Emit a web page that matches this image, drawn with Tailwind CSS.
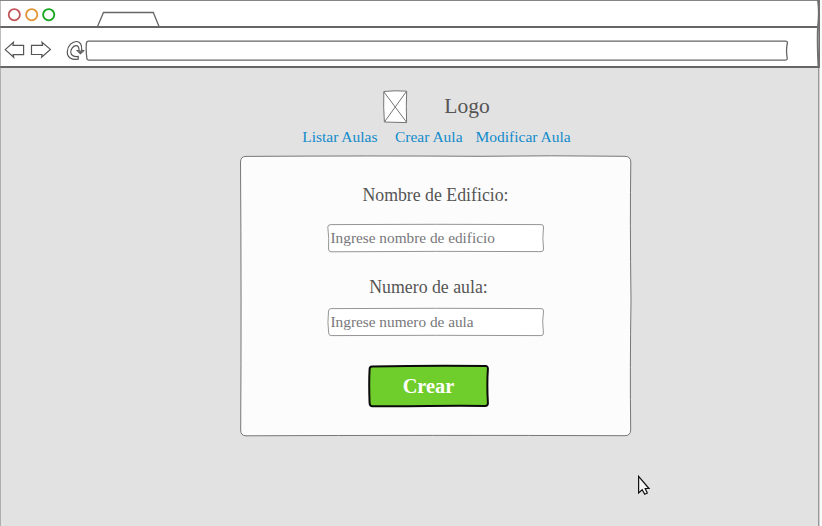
<!DOCTYPE html>
<html lang="es">
<head>
<meta charset="utf-8">
<title>Crear Aula</title>
<script src="https://cdn.jsdelivr.net/npm/@tailwindcss/browser@4"></script>
</head>
<body class="w-[822px] h-[526px] overflow-hidden bg-[#fafafa] font-['Liberation_Serif',serif] text-[#555]">
<div class="relative flex h-[526px] w-[820px] flex-col bg-[#e2e2e2]">
  <!-- window title bar -->
  <header class="flex h-[26px] items-start bg-white">
    <svg class="h-[26px] w-[820px]" viewBox="0 0 820 26" fill="none">
      <path d="M0 .5H818" stroke="#858585"/>
      <circle cx="14.3" cy="14.7" r="5.6" stroke="#c25558" stroke-width="1.8"/>
      <circle cx="31.7" cy="14.7" r="5.6" stroke="#e29535" stroke-width="1.8"/>
      <circle cx="48.7" cy="14.7" r="5.6" stroke="#13a51b" stroke-width="1.8"/>
      <path d="M97.5 26.5L103.5 12.5H153.3L159 26.5" stroke="#666" stroke-width="1.3"/>
    </svg>
  </header>
  <!-- navigation toolbar -->
  <div class="flex h-[42px] bg-white">
    <svg class="h-[42px] w-[820px]" viewBox="0 26 820 42" fill="none" stroke="#555" stroke-width="1.2">
      <path d="M0 27H819" stroke="#666" stroke-width="2"/>
      <path d="M0 67H819" stroke="#666" stroke-width="1.8"/>
      <path d="M5.200 49.600L13.400 42.300L13 45.400H23.600V54.600H13.200L13.700 57.300Z"/>
      <path d="M50.400 49.400L42 42.200L42.500 45.400H31.500V54.500H42L41.600 57.200Z"/>
      <path d="M78.200 56.400V59.200C71.500 60 67 57.500 67.300 51.500C67.600 45.500 72.500 41.300 76.800 41.500C80.500 41.800 81.900 45.500 81.700 50.200L83.600 50.700L80.400 53.600L77.200 50.700L79.100 50.300C79 47 77.800 45.300 75.800 45.600C73 46 70.400 49.500 70.800 52.700C71.200 55.600 74.300 57.100 78.200 56.400Z"/>
      <path d="M77.800 50.600H83.200L80.400 53.200Z" fill="#666" stroke="none"/>
      <path d="M88.500 41.200H785.500Q787.700 41.200 787.400 43Q785.800 50 787.200 58Q787.400 60.200 785.200 60.200H89Q87 60.200 86.800 58Q85.800 50 86.400 43.300Q86.600 41.200 88.500 41.200Z" stroke="#666" stroke-width="1.300"/>
    </svg>
  </div>
  <main class="flex flex-1 flex-col pl-[240px]">
    <div class="flex h-[55px] items-start pl-[143px] pt-[22px]">
      <svg class="h-[34px] w-[25px] shrink-0" viewBox="0 0 25 34" fill="white" stroke="#747474" stroke-width="1">
        <path d="M.8 1.500Q12 .2 23.700 1.200Q23 16 23.600 32.600L1.400 32Q.3 18 .8 1.500Z"/>
        <path d="M1 2L23.400 32M23.400 1.500L1.400 32" fill="none"/>
      </svg>
      <h1 class="ml-[36.3px] mt-[4px] whitespace-nowrap text-[21.5px] leading-[24px]">Logo</h1>
    </div>
    <nav class="flex h-[32px] whitespace-nowrap pl-[62.2px] pt-[4px] text-[15.5px] leading-[20px] text-[#118bcb]">
      <a class="w-[92.8px]">Listar Aulas</a><a class="w-[80.5px]">Crear Aula</a><a>Modificar Aula</a>
    </nav>
    <form class="relative flex h-[282px] w-[392px] flex-col items-center">
      <svg class="absolute inset-0 h-[282px] w-[392px]" viewBox="240 155 392 282">
        <path d="M246 156.400Q370 155.600 480 156.300Q550 155.300 625 156.300Q630.600 156.300 630.800 162Q629.900 220 631 300Q629.900 370 630.700 430Q630.500 435.700 625 435.700Q430 435 246 435.800Q240.600 435.700 240.700 430Q241.500 300 240.500 162Q240.700 156.300 246 156.400Z" fill="#fcfcfc" stroke="#777"/>
      </svg>
      <label class="relative mt-[28px] h-[24px] whitespace-nowrap pr-[1px] text-[17.8px] leading-[24px]">Nombre de Edificio:</label>
      <div class="relative mt-[16px] flex h-[30px] w-[218px] items-center pl-[3.5px]">
        <svg class="absolute inset-0 h-[30px] w-[218px]" viewBox="0 0 218 30"><path d="M4 1.600Q110 1 214 1.600Q216.700 1.600 216.500 4Q215.200 16 216.500 26Q216.600 28.600 214 28.600Q110 28 4 28.800Q2 28.800 1.500 26Q2.300 16 .8 4Q1 1.600 4 1.600Z" fill="white" stroke="#959595"/></svg>
        <span class="relative whitespace-nowrap text-[15.3px] leading-[20px] text-[#77777a]">Ingrese nombre de edificio</span>
      </div>
      <label class="relative mt-[22px] h-[24px] whitespace-nowrap pr-[15px] text-[17.8px] leading-[24px]">Numero de aula:</label>
      <div class="relative mt-[8px] flex h-[30px] w-[218px] items-center pl-[3.5px]">
        <svg class="absolute inset-0 h-[30px] w-[218px]" viewBox="0 0 218 30"><path d="M4 1.600Q110 1 214 1.600Q216.700 1.600 216.500 4Q214.900 14 216.400 26Q216.600 28.600 214 28.600Q110 28 4 28.600Q2 28.600 1.700 26Q.3 16 1.500 4Q2 1.600 4 1.600Z" fill="white" stroke="#959595"/></svg>
        <span class="relative whitespace-nowrap text-[15.3px] leading-[20px] text-[#77777a]">Ingrese numero de aula</span>
      </div>
      <button type="button" class="relative mt-[27px] -ml-[14px] h-[44px] w-[122px] pr-[1px] text-[20.4px] font-bold leading-[24px] text-white">
        <svg class="absolute inset-0 h-[44px] w-[122px]" viewBox="0 0 122 44"><path d="M4 2.500Q60 1.400 117.500 2Q120 2 119.900 5Q118.800 20 119.900 39Q120 42 117 42Q90 41.600 60 42.100Q30 42.500 4 42.300Q1.700 42 1.600 39Q.8 20 1.600 5Q1.700 2.600 4 2.500Z" fill="#6fce2b" stroke="#0a0a0a" stroke-width="2"/></svg>
        <span class="relative">Crear</span>
      </button>
    </form>
  </main>
  <!-- window edges and pointer -->
  <svg class="pointer-events-none absolute left-0 top-0 h-[526px] w-[822px]" viewBox="0 0 822 526" fill="none">
    <path d="M.5 0V526" stroke="#858585" stroke-opacity=".55"/>
    <path d="M818 0Q819.800 12 818 27Q817.300 40 818.500 67" stroke="#707070" stroke-width="2"/>
    <path d="M819.500 0V68" stroke="#707070"/>
    <path d="M818.500 68V526" stroke="#999"/>
    <path d="M819.500 68V526" stroke="#d0d0d0"/>
    <path d="M638.600 476.300V493L642.200 489.800L644.700 494.200L647.300 493L645.200 488.500H649Z" fill="#f5f5f5" stroke="#111" stroke-width="1.200"/>
  </svg>
</div>
</body>
</html>
